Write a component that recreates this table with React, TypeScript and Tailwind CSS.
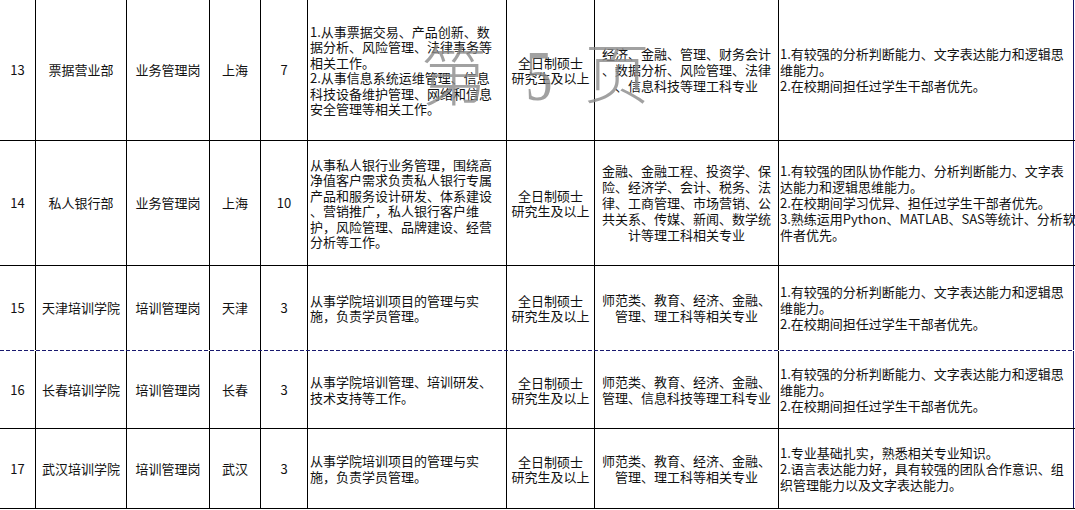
/**
 * Recruitment table page (rows 13–17) with the "第 5 页" watermark.
 */
type Row = {
  no: string
  dept: string
  post: string
  city: string
  count: string
  desc: string[]
  major: string[]
  req: string[]
  h: string
}

const EDU = ['全日制硕士', '研究生及以上']

const REQ_A = [
  '1.有较强的分析判断能力、文字表达能力和逻辑思',
  '维能力。',
  '2.在校期间担任过学生干部者优先。',
]

const ROWS: Row[] = [
  {
    no: '13',
    dept: '票据营业部',
    post: '业务管理岗',
    city: '上海',
    count: '7',
    desc: [
      '1.从事票据交易、产品创新、数',
      '据分析、风险管理、法律事务等',
      '相关工作。',
      '2.从事信息系统运维管理、信息',
      '科技设备维护管理、网络和信息',
      '安全管理等相关工作。',
    ],
    major: ['经济、金融、管理、财务会计', '、数据分析、风险管理、法律', '、信息科技等理工科专业'],
    req: REQ_A,
    h: 'h-[141px] border-b border-black',
  },
  {
    no: '14',
    dept: '私人银行部',
    post: '业务管理岗',
    city: '上海',
    count: '10',
    desc: [
      '从事私人银行业务管理，围绕高',
      '净值客户需求负责私人银行专属',
      '产品和服务设计研发、体系建设',
      '、营销推广，私人银行客户维',
      '护，风险管理、品牌建设、经营',
      '分析等工作。',
    ],
    major: [
      '金融、金融工程、投资学、保',
      '险、经济学、会计、税务、法',
      '律、工商管理、市场营销、公',
      '共关系、传媒、新闻、数学统',
      '计等理工科相关专业',
    ],
    req: [
      '1.有较强的团队协作能力、分析判断能力、文字表',
      '达能力和逻辑思维能力。',
      '2.在校期间学习优异、担任过学生干部者优先。',
      '3.熟练运用Python、MATLAB、SAS等统计、分析软',
      '件者优先。',
    ],
    h: 'h-[125px] border-b border-black',
  },
  {
    no: '15',
    dept: '天津培训学院',
    post: '培训管理岗',
    city: '天津',
    count: '3',
    desc: ['从事学院培训项目的管理与实', '施，负责学员管理。'],
    major: ['师范类、教育、经济、金融、', '管理、理工科等相关专业'],
    req: REQ_A,
    h: 'h-[84px]',
  },
  {
    no: '16',
    dept: '长春培训学院',
    post: '培训管理岗',
    city: '长春',
    count: '3',
    desc: ['从事学院培训管理、培训研发、', '技术支持等工作。'],
    major: ['师范类、教育、经济、金融、', '管理、信息科技等理工科专业'],
    req: REQ_A,
    h: 'h-[78px] border-b border-black',
  },
  {
    no: '17',
    dept: '武汉培训学院',
    post: '培训管理岗',
    city: '武汉',
    count: '3',
    desc: ['从事学院培训项目的管理与实', '施，负责学员管理。'],
    major: ['师范类、教育、经济、金融、', '管理、理工科等相关专业'],
    req: ['1.专业基础扎实，熟悉相关专业知识。', '2.语言表达能力好，具有较强的团队合作意识、组', '织管理能力以及文字表达能力。'],
    h: 'h-[80px] border-b border-black',
  },
]

function Lines({ lines, leading = 'leading-[15.5px]' }: { lines: string[]; leading?: string }) {
  return (
    <div className={leading}>
      {lines.map((l, i) => (
        <div key={i} className="whitespace-nowrap">
          {l}
        </div>
      ))}
    </div>
  )
}

function TableRow({ r }: { r: Row }) {
  const cell = 'shrink-0 border-r border-black flex items-center h-full'
  return (
    <div className={`flex ${r.h}`}>
      <div className={`${cell} w-[36px] justify-center`}>{r.no}</div>
      <div className={`${cell} w-[91px] justify-center`}>{r.dept}</div>
      <div className={`${cell} w-[83px] justify-center`}>{r.post}</div>
      <div className={`${cell} w-[51px] justify-center`}>{r.city}</div>
      <div className={`${cell} w-[47px] justify-center`}>{r.count}</div>
      <div className={`${cell} w-[199px] pl-[2px]`}>
        <Lines lines={r.desc} />
      </div>
      <div className={`${cell} w-[88px] justify-center text-center`}>
        <Lines lines={EDU} leading="leading-[15px]" />
      </div>
      <div className={`${cell} w-[184px] justify-center text-center`}>
        <Lines lines={r.major} leading="leading-[16px]" />
      </div>
      <div className="shrink-0 border-r border-[#141466] flex items-center h-full w-[295px] pl-[1px]">
        <Lines lines={r.req} leading="leading-[16px]" />
      </div>
    </div>
  )
}

export default function App() {
  return (
    <div className="relative w-[1075px] h-[510px] overflow-hidden bg-white text-[13px] text-[#111] font-['Noto_Sans_CJK_SC',sans-serif]">
      {ROWS.map((r) => (
        <div key={r.no}>
          <TableRow r={r} />
          {r.no === '15' && (
            <div className="h-px w-[1074px] bg-[repeating-linear-gradient(90deg,#1a1a6e_0px,#1a1a6e_4px,transparent_4px,transparent_6px)]" />
          )}
        </div>
      ))}

      {/* watermark */}
      <div className="pointer-events-none absolute inset-0 text-[#8a8a8a]/80">
        <span className="absolute left-[421px] top-[38px] text-[66px] leading-none font-light">第</span>
        <span className="absolute left-[521px] top-[40px] text-[72px] leading-none font-['Liberation_Serif',serif] scale-x-75">
          5
        </span>
        <span className="absolute left-[584px] top-[36px] text-[66px] leading-none font-light">页</span>
      </div>
    </div>
  )
}
